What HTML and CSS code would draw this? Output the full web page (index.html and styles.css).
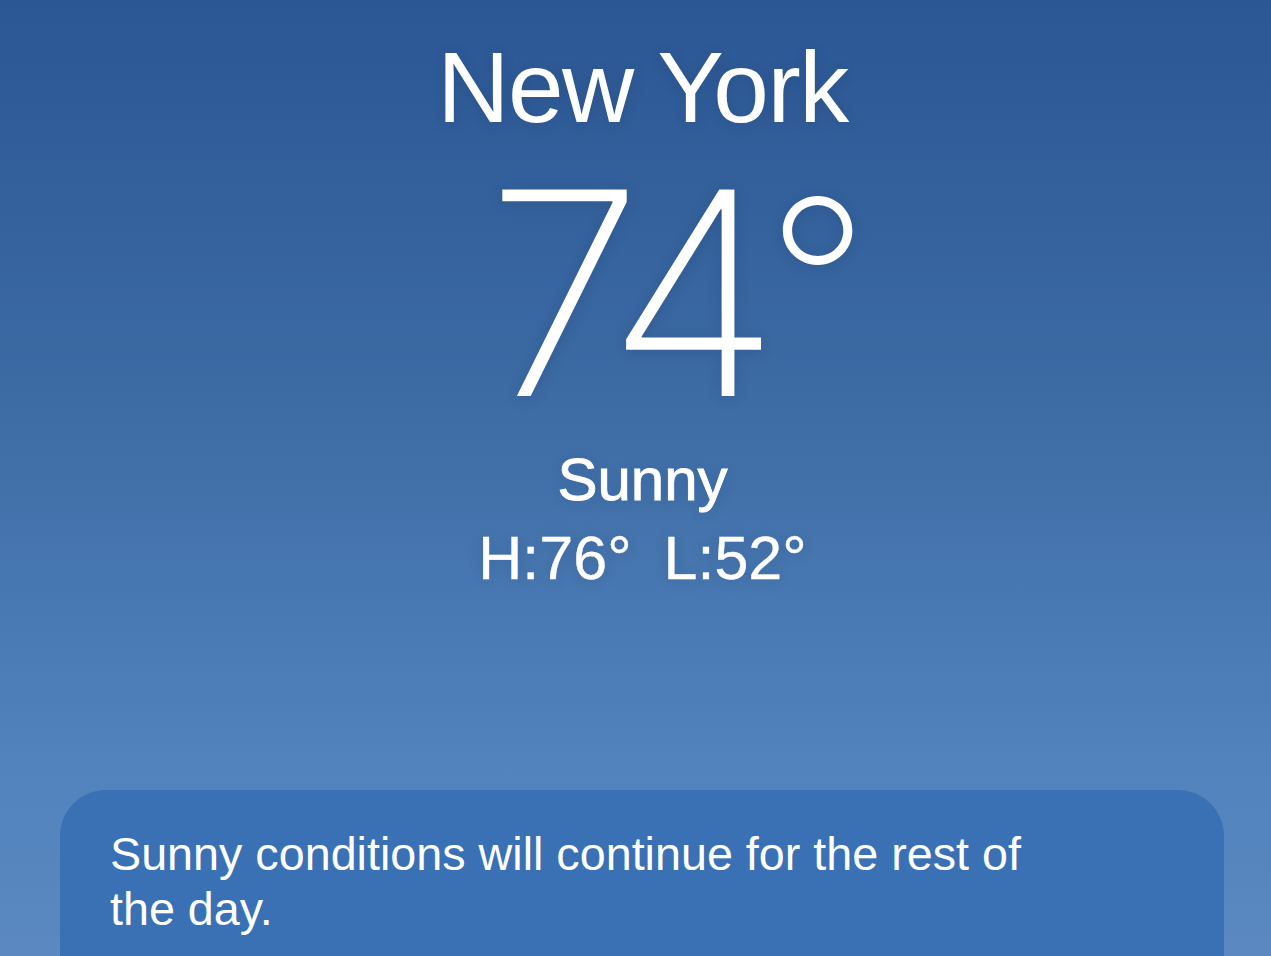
FILE: index.html
```html
<!DOCTYPE html>
<html lang="en">
<head>
    <meta charset="UTF-8">
    <meta name="viewport" content="width=device-width, initial-scale=1.0">
    <title>Weather - New York</title>
    <link rel="stylesheet" href="styles.css">
</head>
<body>
    <main class="weather">
        <header class="current">
            <h1 class="city">New York</h1>
            <div class="temp">74<span class="deg">°</span></div>
            <div class="condition">Sunny</div>
            <div class="range">
                <span>H:76°</span>
                <span>L:52°</span>
            </div>
        </header>

        <section class="summary-card">
            <p class="summary-text">Sunny conditions will continue for the rest of the day.</p>
        </section>
    </main>
</body>
</html>
```

FILE: styles.css
```css
/* Full-bleed sky background */
html, body {
    margin: 0;
    padding: 0;
    height: 100%;
}

body {
    font-family: "Liberation Sans", Arial, sans-serif;
    color: #fff;
    background: linear-gradient(to bottom, #2b5794 0%, #3c6aa3 40%, #5283bd 80%, #5b88c0 100%);
    overflow: hidden;
}

.weather {
    height: 956px;
    display: flex;
    flex-direction: column;
}

/* Current conditions block */
.current {
    display: flex;
    flex-direction: column;
    align-items: center;
    padding-top: 29px;
    padding-left: 14px;
    text-shadow: 0 2px 14px rgba(20, 40, 80, 0.18);
}

.city {
    margin: 0;
    font-size: 100px;
    font-weight: 400;
    line-height: 116px;
    letter-spacing: -1.5px;
}

.temp {
    font-family: "Inter", sans-serif;
    font-weight: 200;
    font-size: 284px;
    line-height: 296px;
    letter-spacing: -20px;
    margin-left: 70px;
}

/* smaller, raised degree ring so it sits level with the top of the digits */
.temp .deg {
    font-size: 226px;
    line-height: 0;
    vertical-align: 34px;
    letter-spacing: 0;
    margin-left: 6px;
}

.condition {
    margin-top: 2px;
    font-size: 60px;
    line-height: 74px;
    -webkit-text-stroke: 0.9px #fff;
}

.range {
    display: flex;
    gap: 32px;
    margin-top: 4px;
    font-size: 61px;
    line-height: 74px;
    -webkit-text-stroke: 0.4px #fff;
}

/* Forecast summary card */
.summary-card {
    margin-top: auto;
    margin-left: 60px;
    width: 1164px;
    height: 166px;
    box-sizing: border-box;
    padding: 37px 50px 0;
    background: #3a71b4;
    border-radius: 46px 46px 0 0;
}

.summary-text {
    margin: 0;
    max-width: 960px;
    font-size: 46.7px;
    line-height: 55px;
}
```
